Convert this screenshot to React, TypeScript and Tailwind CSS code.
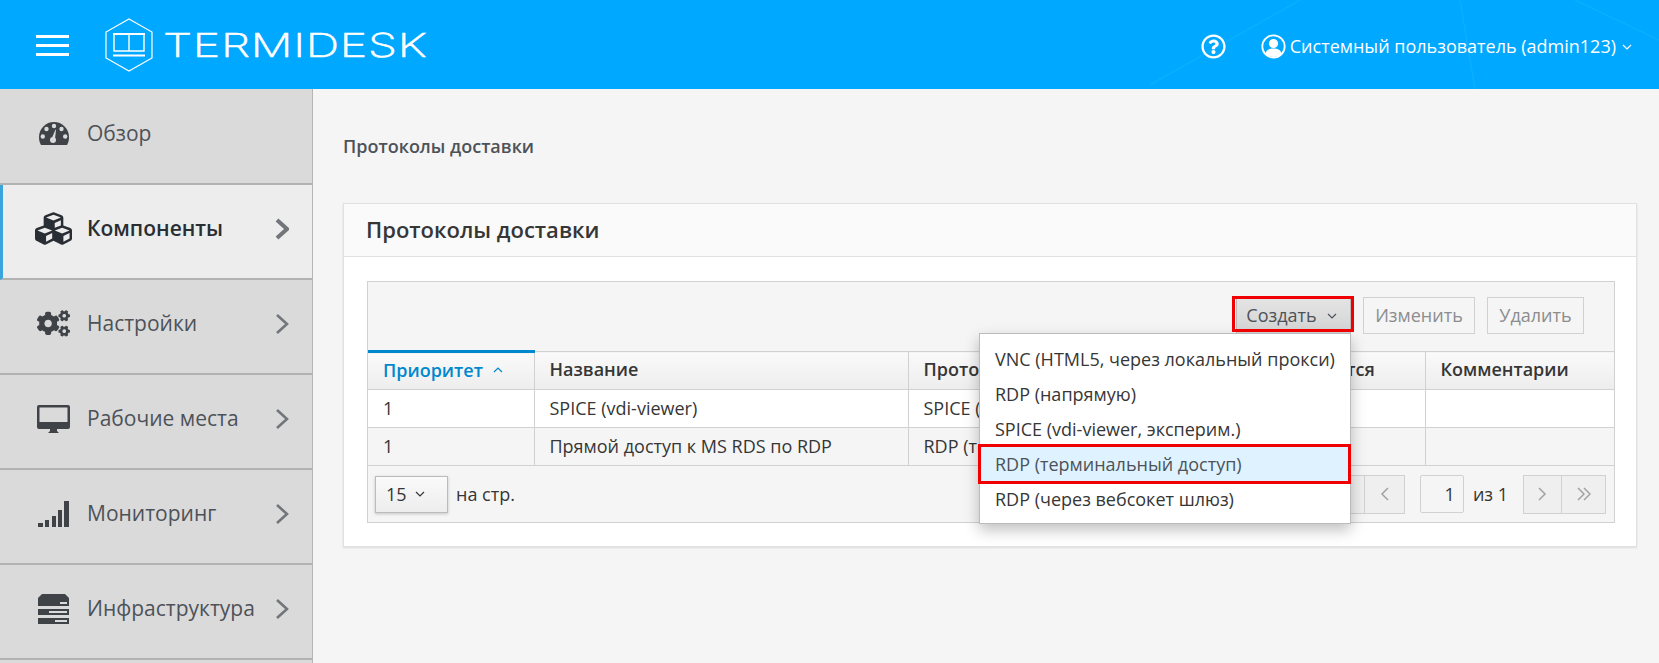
import { FaCogs, FaCubes, FaRegQuestionCircle } from "react-icons/fa";
import type { ReactNode } from "react";

function Chevron({ bold }: { bold?: boolean }) {
  return (
    <svg width="14" height="22" viewBox="0 0 14 22" fill="none" className="text-[#72767b]">
      <path d="M2 2 L12 11 L2 20" stroke="currentColor" strokeWidth={bold ? 4 : 2.6} />
    </svg>
  );
}

function Caret({ className }: { className?: string }) {
  return (
    <svg width="10" height="6" viewBox="0 0 10 6" fill="none" className={className}>
      <path d="M1 1 L5 5 L9 1" stroke="currentColor" strokeWidth="1.2" />
    </svg>
  );
}

function Logo() {
  return (
    <div className="mt-[1px] flex items-center">
      <svg width="48" height="54" viewBox="0 0 48 54" fill="none" className="text-white">
        <path d="M24 1 L47 14 L47 40 L24 53 L1 40 L1 14 Z" stroke="currentColor" strokeWidth="1.2" />
        <path d="M9 16 H39 V33 H9 Z M24 16 V33" stroke="currentColor" strokeWidth="1.4" />
        <path d="M8 16 H40" stroke="currentColor" strokeWidth="2" />
        <path d="M8 37.5 H40" stroke="currentColor" strokeWidth="2" />
      </svg>
      <span className="ml-[10px] origin-left scale-x-[1.41] font-['Inter',sans-serif] text-[33px] leading-none font-extralight tracking-[0.5px] text-white [-webkit-text-stroke:0.6px_white]">
        TERMIDESK
      </span>
    </div>
  );
}

function UserIcon() {
  return (
    <svg width="25" height="25" viewBox="0 0 25 25" className="text-white">
      <circle cx="12.5" cy="12.5" r="11.2" fill="none" stroke="currentColor" strokeWidth="1.8" />
      <circle cx="12.5" cy="9.5" r="4.6" fill="currentColor" />
      <path d="M4.5 20 C5 16 8 14.5 12.5 14.5 C17 14.5 20 16 20.5 20 C18.5 22 15.5 23 12.5 23 C9.5 23 6.5 22 4.5 20 Z" fill="currentColor" />
    </svg>
  );
}

function GaugeIcon() {
  return (
    <svg width="30" height="23" viewBox="0 0 30 23" className="ml-[2px]">
      <path d="M2 23 C0.5 20.5 0 18 0 15 A15 15 0 0 1 30 15 C30 18 29.5 20.5 28 23 Z" fill="currentColor" />
      <g fill="#dadada">
        <circle cx="15" cy="4" r="2.2" />
        <circle cx="7.5" cy="7" r="2.2" />
        <circle cx="22.5" cy="7" r="2.2" />
        <circle cx="3.8" cy="14.5" r="2.2" />
        <circle cx="26.2" cy="14.5" r="2.2" />
        <circle cx="14" cy="18" r="3" />
        <path d="M12.5 17 L16.5 7.5 L17 8 L15.8 18.5 Z" />
      </g>
    </svg>
  );
}

function DesktopIcon() {
  return (
    <svg width="33" height="28" viewBox="0 0 33 28" fill="currentColor">
      <path fillRule="evenodd" d="M2 0 H31 A2 2 0 0 1 33 2 V22 A2 2 0 0 1 31 24 H2 A2 2 0 0 1 0 22 V2 A2 2 0 0 1 2 0 Z M2.5 2.5 V17 H30.5 V2.5 Z" />
      <path d="M13 24 H20 V26 L22 28 H11 L13 26 Z" />
    </svg>
  );
}

function SignalIcon() {
  return (
    <svg width="32" height="26" viewBox="0 0 32 26" fill="currentColor">
      <rect x="1" y="22" width="5" height="4" />
      <rect x="8" y="19" width="4" height="7" />
      <rect x="15" y="15" width="4" height="11" />
      <rect x="21" y="9" width="4" height="17" />
      <rect x="27" y="0" width="5" height="26" />
    </svg>
  );
}

function ServerIcon() {
  return (
    <svg width="31" height="30" viewBox="0 0 31 30" fill="currentColor" className="ml-[1px]">
      <path d="M4 0 H27 L31 4 V12 H0 V4 Z" />
      <rect y="15" width="31" height="6" />
      <rect y="24" width="31" height="6" />
      <rect x="22" y="8" width="7" height="2" fill="#dadada" />
      <rect x="11" y="17" width="18" height="2" fill="#dadada" />
      <rect x="17" y="26" width="12" height="2" fill="#dadada" />
    </svg>
  );
}

const navItems: { label: string; icon: ReactNode; arrow: boolean; active?: boolean }[] = [
  { label: "Обзор", icon: <GaugeIcon />, arrow: false },
  { label: "Компоненты", icon: <FaCubes size={37} />, arrow: true, active: true },
  { label: "Настройки", icon: <FaCogs size={33} />, arrow: true },
  { label: "Рабочие места", icon: <DesktopIcon />, arrow: true },
  { label: "Мониторинг", icon: <SignalIcon />, arrow: true },
  { label: "Инфраструктура", icon: <ServerIcon />, arrow: true },
];

function Sidebar() {
  return (
    <aside className="flex w-[313px] shrink-0 flex-col border-r border-[#b5b5b5] bg-[#dadada] pt-[1px]">
      {navItems.map((item) => (
        <div
          key={item.label}
          className={`flex h-[95px] shrink-0 items-center border-b-2 border-[#b2b2b2] pr-[23px] pb-[6px] ${
            item.active ? "border-l-[3px] border-l-[#39a5dc] bg-[#ededed] pl-[32px] font-semibold text-[#292e34]" : "pl-[37px] text-[#4d5258]"
          }`}
        >
          <span className={`flex shrink-0 items-center ${item.active ? "w-[52px] text-[#292e34]" : "w-[50px] text-[#3f4246]"}`}>{item.icon}</span>
          <span className="flex-1 text-[21px] leading-none">{item.label}</span>
          {item.arrow && <Chevron bold={item.active} />}
        </div>
      ))}
    </aside>
  );
}

const menuItems = [
  "VNC (HTML5, через локальный прокси)",
  "RDP (напрямую)",
  "SPICE (vdi-viewer, эксперим.)",
  "RDP (терминальный доступ)",
  "RDP (через вебсокет шлюз)",
];

function CreateMenu() {
  return (
    <div className="absolute top-[36px] right-0 z-10 w-[372px] border border-[#bbb] bg-white py-[7px] text-[18px] text-[#363636] shadow-[0_6px_14px_rgba(0,0,0,0.25)]">
      {menuItems.map((item, i) => (
        <div
          key={item}
          className={`relative flex h-[35px] items-center pt-[2px] pl-[15px] whitespace-nowrap ${i === 3 ? "bg-[#def3ff] text-[#4d5258]" : ""}`}
        >
          {item}
          {i === 3 && <div className="absolute -top-[2px] -right-[1px] -bottom-[3px] -left-[2px] border-[3px] border-[#f00000]" />}
        </div>
      ))}
    </div>
  );
}

function PageButton({ children, className }: { children: ReactNode; className?: string }) {
  return <div className={`flex h-[37px] items-center justify-center text-[#a0a3a6] ${className ?? ""}`}>{children}</div>;
}

const thClass = "h-[38px] border-r border-b border-[#d1d1d1] bg-gradient-to-b from-[#fafafa] to-[#ededed] px-[15px] pb-[2px] text-left font-semibold whitespace-nowrap";
const tdClass = "h-[38px] border-r border-b border-[#d1d1d1] px-[15px] whitespace-nowrap overflow-hidden";

function DeliveryTable() {
  return (
    <div className="border border-[#d1d1d1] bg-[#f5f5f5] text-[18px] text-[#363636]">
      <div className="flex h-[68px] justify-end gap-[12px] pt-[15px] pr-[30px]">
        <div className="relative h-[37px]">
          <button className="flex h-[37px] w-[115px] items-center justify-center gap-[10px] border border-[#bbb] bg-gradient-to-b from-[#e4e4e4] to-[#d4d4d4] pr-[4px] font-medium text-[#4d5258]">
            Создать
            <Caret />
          </button>
          <div className="absolute -top-[1px] -right-[3px] -left-[4px] z-20 h-[36px] border-[3px] border-[#f00000]" />
          <CreateMenu />
        </div>
        <button className="h-[37px] w-[112px] border border-[#d1d1d1] text-[#8b8d8f]">Изменить</button>
        <button className="h-[37px] w-[97px] border border-[#d1d1d1] text-[#8b8d8f]">Удалить</button>
      </div>
      <table className="w-full table-fixed border-collapse border-t border-[#d1d1d1]">
        <colgroup>
          <col className="w-[166px]" />
          <col className="w-[374px]" />
          <col className="w-[326px]" />
          <col className="w-[191px]" />
          <col />
        </colgroup>
        <thead>
          <tr>
            <th className={`${thClass} border-t-[3px] border-t-[#0088ce] text-[#0088ce]`}>
              <span className="flex items-center gap-[10px]">
                Приоритет
                <Caret className="rotate-180" />
              </span>
            </th>
            <th className={thClass}>Название</th>
            <th className={thClass}>Протокол</th>
            <th className={thClass}>Используется</th>
            <th className={`${thClass} border-r-0`}>Комментарии</th>
          </tr>
        </thead>
        <tbody>
          <tr className="bg-white">
            <td className={tdClass}>1</td>
            <td className={tdClass}>SPICE (vdi-viewer)</td>
            <td className={tdClass}>SPICE (vdi-viewer)</td>
            <td className={tdClass}></td>
            <td className={`${tdClass} border-r-0`}></td>
          </tr>
          <tr className="bg-[#f5f5f5]">
            <td className={tdClass}>1</td>
            <td className={tdClass}>Прямой доступ к MS RDS по RDP</td>
            <td className={tdClass}>RDP (терминальный доступ)</td>
            <td className={tdClass}></td>
            <td className={`${tdClass} border-r-0`}></td>
          </tr>
        </tbody>
      </table>
      <div className="flex h-[56px] items-center pr-[8px] pl-[7px]">
        <button className="flex h-[37px] w-[73px] items-center gap-[8px] border border-[#bbb] bg-gradient-to-b from-[#fafafa] to-[#ededed] pl-[10px] shadow-[0_1px_3px_rgba(0,0,0,0.2)]">
          15
          <Caret />
        </button>
        <span className="ml-[8px]">на стр.</span>
        <div className="ml-auto flex items-center">
          <div className="flex border border-[#d1d1d1] bg-[#efefef]">
            <PageButton className="w-[40px] border-r border-[#d1d1d1]">«</PageButton>
            <PageButton className="w-[39px]">
              <svg width="9" height="14" viewBox="0 0 9 14" fill="none"><path d="M8 1 L2 7 L8 13" stroke="currentColor" strokeWidth="1.5" /></svg>
            </PageButton>
          </div>
          <div className="ml-[15px] flex h-[38px] w-[44px] items-center justify-end rounded-[2px] border border-[#d1d1d1] bg-[#f5f5f5] pr-[8px]">1</div>
          <span className="ml-[9px]">из 1</span>
          <div className="ml-[15px] flex border border-[#d1d1d1] bg-[#efefef]">
            <PageButton className="w-[38px] border-r border-[#d1d1d1]">
              <svg width="9" height="14" viewBox="0 0 9 14" fill="none"><path d="M1 1 L7 7 L1 13" stroke="currentColor" strokeWidth="1.5" /></svg>
            </PageButton>
            <PageButton className="w-[43px]">
              <svg width="14" height="14" viewBox="0 0 14 14" fill="none"><path d="M1 1 L7 7 L1 13 M7 1 L13 7 L7 13" stroke="currentColor" strokeWidth="1.5" /></svg>
            </PageButton>
          </div>
        </div>
      </div>
    </div>
  );
}

export default function App() {
  return (
    <div className="flex h-screen flex-col overflow-hidden bg-[#f5f5f5] font-['Open_Sans',sans-serif]">
      <header className="relative flex h-[89px] shrink-0 items-center overflow-hidden bg-[#00a8ff] text-white">
        <svg className="absolute inset-0 h-full w-full" viewBox="0 0 1659 89" fill="none">
          <path d="M1150 85 L1300 0 M1460 0 L1475 89 M1575 0 L1659 40" stroke="#0caeff" strokeWidth="1.5" />
        </svg>
        <div className="relative mt-[1px] ml-[36px] flex w-[33px] flex-col gap-[6px]">
          <span className="h-[3px] bg-white" />
          <span className="h-[3px] bg-white" />
          <span className="h-[3px] bg-white" />
        </div>
        <div className="relative ml-[36px]">
          <Logo />
        </div>
        <div className="relative mt-[4px] ml-auto flex items-center pr-[27px] text-[18px]">
          <FaRegQuestionCircle size={25} />
          <span className="ml-[35px]"><UserIcon /></span>
          <span className="ml-[4px]">Системный пользователь (admin123)</span>
          <Caret className="ml-[6px]" />
        </div>
      </header>
      <div className="flex min-h-0 flex-1">
        <Sidebar />
        <main className="min-w-0 flex-1 pr-[22px] pl-[30px]">
          <div className="pt-[47px] text-[18px] leading-[20px] font-semibold text-[#4d5258]">Протоколы доставки</div>
          <section className="mt-[47px] border border-[#e1e1e1] bg-white shadow-[0_1px_2px_rgba(0,0,0,0.1)]">
            <h2 className="flex h-[53px] items-center border-b border-[#e1e1e1] bg-[#fafafa] pb-[2px] pl-[22px] text-[22px] font-semibold text-[#363636]">
              Протоколы доставки
            </h2>
            <div className="pt-[24px] pr-[21px] pb-[23px] pl-[23px]">
              <DeliveryTable />
            </div>
          </section>
        </main>
      </div>
    </div>
  );
}
